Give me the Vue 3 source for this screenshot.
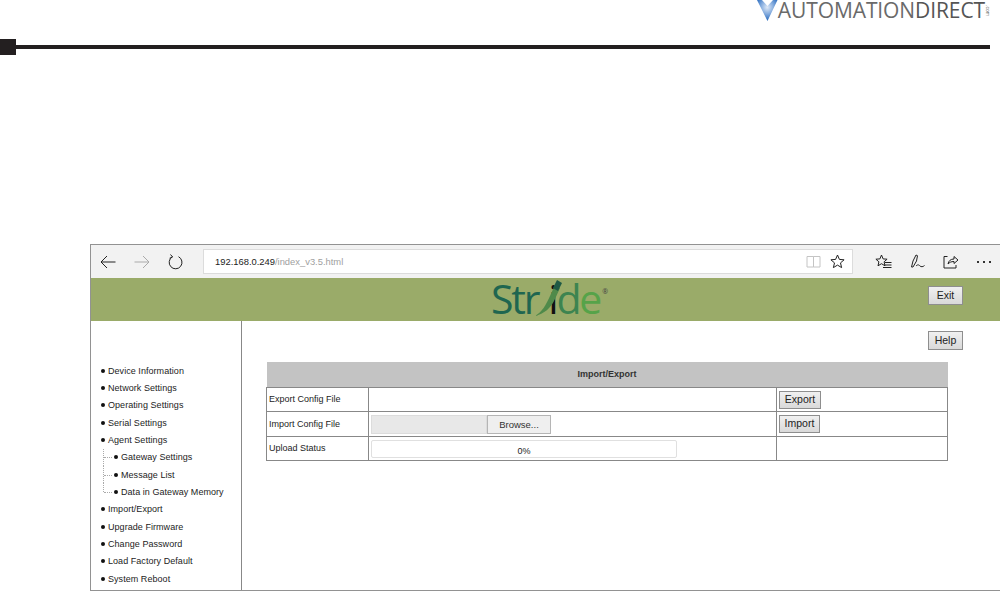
<script setup>
const menu = [
  { label: 'Device Information' },
  { label: 'Network Settings' },
  { label: 'Operating Settings' },
  { label: 'Serial Settings' },
  { label: 'Agent Settings' },
  { label: 'Gateway Settings', child: true },
  { label: 'Message List', child: true },
  { label: 'Data in Gateway Memory', child: true, last: true },
  { label: 'Import/Export' },
  { label: 'Upgrade Firmware' },
  { label: 'Change Password' },
  { label: 'Load Factory Default' },
  { label: 'System Reboot' },
]
</script>

<template>
  <div class="page">
    <header class="doc-head">
      <div class="brand">
        <svg class="brand-v" width="21" height="21" viewBox="0 0 21 21">
          <defs>
            <radialGradient id="vg" cx="50%" cy="35%" r="60%">
              <stop offset="0" stop-color="#dfe9f7" />
              <stop offset="0.55" stop-color="#7fa8dc" />
              <stop offset="1" stop-color="#2f6fc0" />
            </radialGradient>
          </defs>
          <path d="M0 0 L5 0 L10.500 6 L16 0 L20.500 0 L10.500 21 Z" fill="url(#vg)" />
        </svg>
        <span class="brand-text">AUTOMATION<b>DIRECT</b></span>
        <span class="brand-com">.com</span>
      </div>
      <div class="rule">
        <span class="rule-mark"></span>
        <span class="rule-line"></span>
      </div>
    </header>

    <section class="browser">
      <div class="toolbar">
        <div class="nav">
          <svg width="16" height="14" viewBox="0 0 16 14" fill="none" stroke="#222" stroke-width="1"><path d="M15.500 7H1M7 1 1 7l6 6" /></svg>
          <svg width="16" height="14" viewBox="0 0 16 14" fill="none" stroke="#aaa" stroke-width="1"><path d="M.5 7H15M9 1l6 6-6 6" /></svg>
          <svg width="15" height="16" viewBox="0 0 15 16" fill="none" stroke="#222" stroke-width="1"><path d="M4.300 2.900a6.400 6.400 0 1 0 6.200-.2M2.500 .5 4.600 3 1.600 4.200" /></svg>
        </div>
        <div class="address">
          <span class="url"><span class="host">192.168.0.249</span>/index_v3.5.html</span>
          <svg width="15" height="13" viewBox="0 0 15 13" fill="none" stroke="#c4c4c4" stroke-width="1"><path d="M7.500 1.500H1v10.500h6.500zM7.500 1.500H14v10.500H7.500z" /></svg>
          <svg width="15" height="15" viewBox="0 0 15 15" fill="none" stroke="#222" stroke-width="1"><path d="m7.500 1 1.900 4.400 4.700.4-3.600 3.100 1.100 4.700-4.100-2.500-4.100 2.500 1.100-4.700L.9 5.800l4.700-.4z" /></svg>
        </div>
        <div class="tools">
          <svg width="17" height="16" viewBox="0 0 17 16" fill="none" stroke="#222" stroke-width="1"><path d="m6.500 1 1.600 3.900 4 .3-3 2.600.9 4-3.500-2.100L3 11.800l.9-4-3-2.600 4-.3zM10 8.500h6.500M9.500 11h7M8 13.500h8.500" /></svg>
          <svg width="15" height="15" viewBox="0 0 15 15" fill="none" stroke="#222" stroke-width="1"><path d="M1.500 13 3 7l3-6 1.500.7-1 5.300-3.500 6zM6 12c2-2 3-1 4 0s3 1 4.500-.5" /></svg>
          <svg width="16" height="15" viewBox="0 0 16 15" fill="none" stroke="#222" stroke-width="1"><path d="M4.500 2.500H1v11.500h12v-3M5 10c.5-3 2.500-5 6-5V2.500L15 6l-4 3.500V7.500C8 7.500 6.500 8.500 5 10z" /></svg>
          <span class="dots"><i></i><i></i><i></i></span>
        </div>
      </div>

      <div class="banner">
        <div class="stride">
          <span class="s1">Str</span><span class="s2">i</span><span class="s3">d</span><span class="s4">e</span><sup class="s5">®</sup>
          <svg class="quill" width="27" height="37" viewBox="0 0 27 37">
            <path d="M0 37C7 33 11 26 15 17L20 6l5 3-5 11C16 29 9 35 0 37z" fill="#4f8a4a" />
            <path d="m18 9 4-8 5 3-4 8z" fill="#1f5a45" />
          </svg>
        </div>
        <button class="btn exit">Exit</button>
      </div>

      <div class="content">
        <nav class="side">
          <div v-for="m in menu" :key="m.label" class="item" :class="{ child: m.child, last: m.last }">
            <span v-if="m.child" class="branch"></span>
            <span class="bullet"></span>
            <span>{{ m.label }}</span>
          </div>
        </nav>
        <main class="main">
          <div class="help-row"><button class="btn help">Help</button></div>
          <table class="grid">
            <colgroup>
              <col class="c1" />
              <col class="c2" />
              <col class="c3" />
            </colgroup>
            <thead>
              <tr class="r-head"><th colspan="3">Import/Export</th></tr>
            </thead>
            <tbody>
              <tr class="r-a">
                <td>Export Config File</td>
                <td></td>
                <td><button class="btn cell-btn">Export</button></td>
              </tr>
              <tr class="r-b">
                <td>Import Config File</td>
                <td>
                  <div class="file">
                    <span class="file-name"></span>
                    <span class="browse">Browse...</span>
                  </div>
                </td>
                <td><button class="btn cell-btn import">Import</button></td>
              </tr>
              <tr class="r-c">
                <td>Upload Status</td>
                <td><div class="progress">0%</div></td>
                <td></td>
              </tr>
            </tbody>
          </table>
        </main>
      </div>
    </section>
  </div>
</template>

<style scoped>
.page {
  width: 1000px;
  height: 591px;
  overflow: hidden;
  background: #fff;
  font-family: "Liberation Sans", Arial, sans-serif;
  color: #1c1c1c;
  display: flex;
  flex-direction: column;
}
.doc-head {
  height: 55px;
  flex: none;
  display: flex;
  flex-direction: column;
}
.brand {
  height: 39px;
  padding-right: 10px;
  display: flex;
  justify-content: flex-end;
  align-items: flex-start;
}
.brand-text {
  font-family: "Open Sans", sans-serif;
  font-size: 21px;
  line-height: 21px;
  letter-spacing: -0.1px;
  color: #6a6a6a;
  white-space: nowrap;
}
.brand-text b {
  font-weight: 400;
  color: #555;
}
.brand-com {
  writing-mode: vertical-rl;
  font-size: 5px;
  line-height: 5px;
  color: #666;
  margin-top: 5px;
}
.rule {
  display: flex;
  align-items: center;
  height: 16px;
}
.rule-mark {
  width: 16px;
  height: 16px;
  background: #231f20;
}
.rule-line {
  width: 974px;
  height: 4px;
  background: #231f20;
}
.browser {
  margin: 189px 0 0 90px;
  flex: 1;
  min-height: 0;
  border: 1px solid #929292;
  border-right: none;
  display: flex;
  flex-direction: column;
}
.toolbar {
  height: 33px;
  flex: none;
  background: #f2f2f2;
  display: flex;
  align-items: center;
}
.nav {
  width: 112px;
  padding-left: 9px;
  display: flex;
  gap: 18px;
  align-items: center;
  box-sizing: border-box;
}
.address {
  width: 650px;
  height: 25px;
  box-sizing: border-box;
  background: #fff;
  border: 1px solid #dcdcdc;
  display: flex;
  align-items: center;
  padding: 0 7px 0 11px;
  gap: 9px;
}
.url {
  flex: 1;
  font-size: 9.400px;
  color: #a0a0a0;
}
.host {
  color: #222;
}
.tools {
  margin-left: 22px;
  display: flex;
  align-items: center;
  gap: 18px;
}
.dots {
  display: flex;
  gap: 4px;
}
.dots i {
  width: 2px;
  height: 2px;
  background: #333;
}
.banner {
  height: 43px;
  flex: none;
  box-sizing: border-box;
  background: #9aab69;
  display: flex;
  align-items: flex-start;
  justify-content: flex-end;
  position: relative;
  padding: 8px 37px 0 0;
}
.stride {
  position: absolute;
  left: 400px;
  top: -5px;
  height: 43px;
  font-family: "Open Sans", sans-serif;
  font-size: 41px;
  line-height: 50px;
  letter-spacing: -2.200px;
  white-space: nowrap;
}
.s1 { color: #1f6650; }
.s2 { color: #111; margin-left: 10px; }
.s3 { color: #3d8450; }
.s4 { color: #56a349; }
.s5 {
  font-size: 7px;
  color: #444;
  vertical-align: 20px;
  line-height: 0;
  margin-left: 2px;
}
.quill {
  position: absolute;
  left: 44px;
  top: 6px;
}
.btn {
  font-family: "Liberation Sans", Arial, sans-serif;
  font-size: 10.500px;
  color: #222;
  border: 1px solid #8e8e8e;
  background: linear-gradient(#f0f0f0, #d9d9d9);
  padding: 0 0 2px;
  box-sizing: border-box;
}
.exit,
.help {
  width: 35px;
  height: 19px;
}
.content {
  flex: 1;
  min-height: 0;
  display: flex;
}
.side {
  width: 151px;
  flex: none;
  box-sizing: border-box;
  border-right: 1px solid #888;
  padding: 41px 0 0 10px;
  font-size: 9px;
  letter-spacing: 0.05px;
}
.item {
  height: 17.350px;
  display: flex;
  align-items: center;
  white-space: nowrap;
}
.bullet {
  width: 4px;
  height: 4px;
  border-radius: 50%;
  background: #111;
  margin-right: 3px;
}
.item.child {
  padding-left: 2px;
}
.branch {
  width: 9px;
  height: 100%;
  margin-right: 2px;
  flex: none;
  box-sizing: border-box;
  position: relative;
  border-left: 1px dotted #aaa;
}
.branch::after {
  content: "";
  position: absolute;
  left: 0;
  right: 0;
  top: 50%;
  border-top: 1px dotted #aaa;
}
.item.last .branch {
  height: 50%;
  align-self: flex-start;
}
.item.last .branch::after {
  top: 100%;
}
.main {
  flex: 1;
  min-width: 0;
  padding: 10px 0 0 24px;
}
.help-row {
  width: 697px;
  display: flex;
  justify-content: flex-end;
  margin-bottom: 12px;
}
.grid {
  width: 681px;
  table-layout: fixed;
  border-collapse: collapse;
  font-size: 9px;
}
.c1 { width: 102px; }
.c2 { width: 408px; }
.c3 { width: 171px; }
.grid th {
  height: 23px;
  padding: 0 0 2px;
  background: #c3c3c3;
  font-size: 9px;
  font-weight: 700;
  color: #333;
  border: 0;
}
.grid td {
  border: 1px solid #888;
  padding: 0 2px;
}
.grid td:first-child {
  padding-left: 2px;
  padding-bottom: 1px;
}
.r-a td { height: 22px; }
.r-b td { height: 23px; }
.r-c td { height: 22px; }
.cell-btn {
  display: block;
  width: 42px;
  height: 18px;
}
.cell-btn.import {
  width: 41px;
}
.file {
  width: 180px;
  height: 19px;
  display: flex;
}
.file-name {
  flex: 1;
  background: #e8e8e8;
  border: 1px solid #dcdcdc;
}
.browse {
  width: 64px;
  box-sizing: border-box;
  background: #efefef;
  border: 1px solid #b5b5b5;
  font-size: 9.500px;
  text-align: center;
  line-height: 17px;
  color: #333;
}
.progress {
  width: 306px;
  height: 18px;
  box-sizing: border-box;
  border: 1px solid #e0e0e0;
  border-radius: 2px;
  text-align: center;
  line-height: 21px;
  font-size: 9px;
}
</style>

<style>
html, body { margin: 0; padding: 0; background: #fff; }
</style>
